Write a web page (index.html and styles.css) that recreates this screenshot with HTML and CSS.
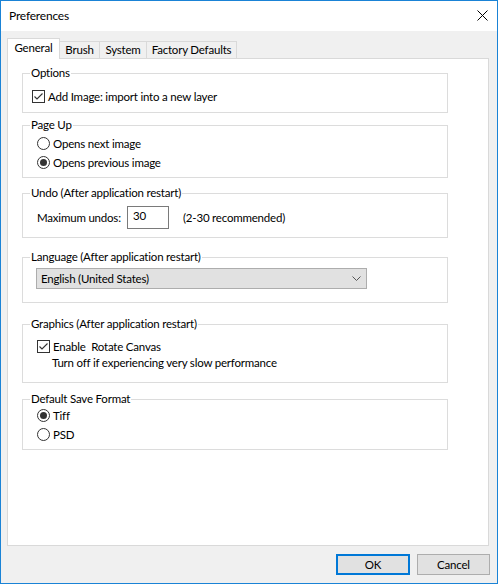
FILE: index.html
```html
<!DOCTYPE html>
<html>
<head>
<meta charset="utf-8">
<link rel="stylesheet" href="styles.css">
</head>
<body>
<div class="window">
  <div class="titlebar">
    <span class="title">Preferences</span>
    <svg class="close" width="11" height="11" viewBox="0 0 11 11"><path d="M0.5 0.5 L10.5 10.5 M10.5 0.5 L0.5 10.5" stroke="#000" stroke-width="1" fill="none"/></svg>
  </div>
  <div class="body">
    <div class="tabs">
      <div class="tab tab-active tab-general">General</div>
      <div class="tab tab-brush">Brush</div>
      <div class="tab tab-system">System</div>
      <div class="tab tab-factory">Factory Defaults</div>
    </div>
    <div class="panel">
      <div class="group g-options">
        <span class="group-title">Options</span>
        <div class="row row-check">
          <span class="check"><svg width="11" height="11" viewBox="0 0 11 11"><path d="M1.5 5.5 L4 8 L9.5 2.5" stroke="#333" stroke-width="1.1" fill="none"/></svg></span>
          <span>Add Image: import into a new layer</span>
        </div>
      </div>
      <div class="group g-pageup">
        <span class="group-title">Page Up</span>
        <div class="row row-radio"><span class="radio"></span><span>Opens next image</span></div>
        <div class="row row-radio"><span class="radio radio-on"></span><span>Opens previous image</span></div>
      </div>
      <div class="group g-undo">
        <span class="group-title">Undo (After application restart)</span>
        <div class="row row-input">
          <span class="undo-label">Maximum undos:</span>
          <span class="textbox">30</span>
          <span class="hint">(2-30 recommended)</span>
        </div>
      </div>
      <div class="group g-lang">
        <span class="group-title">Language (After application restart)</span>
        <div class="select">
          <span>English (United States)</span>
          <svg class="chev" width="9" height="5" viewBox="0 0 9 5"><path d="M0.5 0.5 L4.5 4.5 L8.5 0.5" stroke="#555" stroke-width="1" fill="none"/></svg>
        </div>
      </div>
      <div class="group g-graphics">
        <span class="group-title">Graphics (After application restart)</span>
        <div class="row row-check">
          <span class="check"><svg width="11" height="11" viewBox="0 0 11 11"><path d="M1.5 5.5 L4 8 L9.5 2.5" stroke="#333" stroke-width="1.1" fill="none"/></svg></span>
          <span>Enable&nbsp; Rotate Canvas</span>
        </div>
        <div class="note">Turn off if experiencing very slow performance</div>
      </div>
      <div class="group g-save">
        <span class="group-title">Default Save Format</span>
        <div class="row row-radio"><span class="radio radio-on"></span><span>Tiff</span></div>
        <div class="row row-radio"><span class="radio"></span><span>PSD</span></div>
      </div>
    </div>
    <div class="buttons">
      <div class="btn btn-ok">OK</div>
      <div class="btn btn-cancel">Cancel</div>
    </div>
  </div>
</div>
</body>
</html>
```
FILE: styles.css
```css
* { box-sizing: border-box; }
html, body { margin: 0; padding: 0; }
body {
  font-family: Lato, "Open Sans", "DejaVu Sans", sans-serif;
  font-size: 11.5px;
  letter-spacing: -0.2px;
  color: #000;
  background: #fff;
}
.window {
  width: 498px;
  height: 584px;
  border: 1px solid #1a83d6;
  display: flex;
  flex-direction: column;
  overflow: hidden;
}
.titlebar {
  height: 30px;
  background: #fff;
  display: flex;
  align-items: center;
  justify-content: space-between;
  padding: 0 9px 1px 8px;
}
.title { font-size: 12px; }
.close { display: block; }
.body {
  flex: 1;
  background: #f0f0f0;
  padding: 7px 8px 0 6px;
  display: flex;
  flex-direction: column;
}
.tabs {
  height: 20px;
  display: flex;
  align-items: flex-end;
}
.tab {
  height: 17px;
  border: 1px solid #d9d9d9;
  border-bottom: none;
  background: #f0f0f0;
  margin-left: -1px;
  display: flex;
  align-items: center;
  justify-content: center;
  line-height: 16px;
  padding-bottom: 1px;
}
.tab-active {
  height: 21px;
  margin-bottom: -1px;
  margin-left: 0;
  background: #fff;
  position: relative;
  z-index: 1;
  padding-bottom: 2px;
}
.tab-general { width: 53px; }
.tab-brush { width: 41px; }
.tab-system { width: 48px; }
.tab-factory { width: 91px; }
.panel {
  width: 482px;
  height: 488px;
  background: #fff;
  border: 1px solid #d9d9d9;
  padding: 14px 0 0 14px;
}
.group {
  position: relative;
  width: 426px;
  border: 1px solid #dcdcdc;
  line-height: 16px;
}
.group-title {
  position: absolute;
  top: -9px;
  left: 7px;
  padding: 0 1px;
  background: #fff;
  line-height: 16px;
  white-space: nowrap;
}
.g-options { height: 40px; padding: 14px 0 0 9px; }
.g-pageup { height: 53px; margin-top: 12px; padding: 8px 0 0 14px; }
.g-undo { height: 45px; margin-top: 15px; padding: 12px 0 0 14px; }
.g-lang { height: 46px; margin-top: 19px; padding: 10px 0 0 13px; }
.g-graphics { height: 59px; margin-top: 21px; padding: 13px 0 0 14px; }
.g-save { height: 51px; margin-top: 16px; padding: 6px 0 0 14px; }
.row { display: flex; align-items: center; white-space: nowrap; }
.row-check { height: 17px; }
.row-radio { height: 19px; }
.row-input { height: 23px; }
.check {
  width: 13px;
  height: 13px;
  border: 1px solid #333;
  background: #fff;
  margin-right: 3px;
  display: flex;
  align-items: center;
  justify-content: center;
  flex: none;
}
.check svg { display: block; }
.radio {
  width: 13px;
  height: 13px;
  border: 1px solid #333;
  border-radius: 50%;
  background: #fff;
  margin-right: 3px;
  flex: none;
  position: relative;
}
.radio-on::after {
  content: "";
  position: absolute;
  left: 2px;
  top: 2px;
  width: 7px;
  height: 7px;
  border-radius: 50%;
  background: #333;
}
.undo-label { width: 90px; }
.textbox {
  width: 42px;
  height: 23px;
  border: 1px solid #7a7a7a;
  background: #fff;
  padding: 1px 0 0 5px;
  line-height: 16px;
  align-self: flex-start;
}
.hint { margin-left: 14px; }
.select {
  width: 331px;
  height: 21px;
  background: #e1e1e1;
  border: 1px solid #adadad;
  display: flex;
  align-items: center;
  justify-content: space-between;
  padding: 0 5px 0 4px;
  white-space: nowrap;
}
.chev { display: block; }
.note { margin-left: 15px; line-height: 16px; white-space: nowrap; }
.buttons {
  margin-top: 8px;
  margin-right: -1px;
  display: flex;
  justify-content: flex-end;
  gap: 7px;
}
.btn {
  height: 21px;
  background: #e1e1e1;
  border: 1px solid #adadad;
  display: flex;
  align-items: center;
  justify-content: center;
}
.btn-ok { width: 74px; border: 2px solid #0078d7; }
.btn-cancel { width: 73px; }
```
